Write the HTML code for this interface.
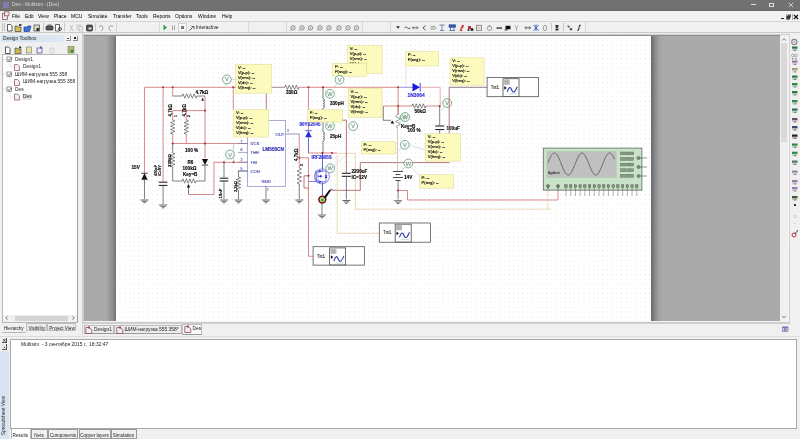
<!DOCTYPE html>
<html><head><meta charset="utf-8"><style>
*{margin:0;padding:0;box-sizing:border-box}
html,body{width:800px;height:439px;overflow:hidden;background:#f0f0f0;font-family:"Liberation Sans",sans-serif;font-size:5px;color:#000;position:relative}
.a{position:absolute}
.t{position:absolute;white-space:nowrap;line-height:1}
.mi{position:absolute;top:14.25px;font-size:5px;color:#000;white-space:nowrap;line-height:1}
.tab{position:absolute;border:1px solid #bdbdbd;background:#ececec;font-size:4.9px;color:#222;white-space:nowrap;line-height:1}
.tr{position:absolute;font-size:4.9px;color:#222;white-space:nowrap;line-height:1}
</style></head><body>
<div id="root" style="position:absolute;left:0;top:0;width:800px;height:439px;will-change:transform">
<div class="a" style="left:0px;top:0px;width:800px;height:10.5px;background:#717171;border-bottom:0.6px solid #686868"></div>
<div class="a" style="left:3px;top:2px;width:6px;height:6px;background:#7f7db0;border-radius:1px"></div>
<div class="t" style="left:12px;top:2.6px;font-size:4.9px;color:#d8d8d8;">Des - Multisim - [Des]</div>
<div class="a" style="left:751px;top:4.2px;width:4.5px;height:0.7px;background:#e0e0e0;"></div>
<div class="a" style="left:769.3px;top:2.5px;width:4.5px;height:4.2px;background:transparent;border:0.6px solid #e0e0e0"></div>
<svg class="a" style="left:788px;top:2px" width="6" height="6"><path d="M0.7 0.7L5.3 5.3M5.3 0.7L0.7 5.3" stroke="#e0e0e0" stroke-width="0.8"/></svg>
<div class="a" style="left:0px;top:10.5px;width:800px;height:10.5px;background:#f2f2f2;"></div>
<svg class="a" style="left:1px;top:11px" width="9" height="9"><rect x="1.5" y="2.5" width="5" height="6" fill="#f3e6e6" stroke="#8a5a5a" stroke-width="0.8"/><rect x="3.5" y="0.8" width="4.5" height="4" fill="#f3e6e6" stroke="#8a5a5a" stroke-width="0.8"/></svg>
<div class="mi" style="left:12px">File</div>
<div class="mi" style="left:25px">Edit</div>
<div class="mi" style="left:38px">View</div>
<div class="mi" style="left:54px">Place</div>
<div class="mi" style="left:71px">MCU</div>
<div class="mi" style="left:88px">Simulate</div>
<div class="mi" style="left:113px">Transfer</div>
<div class="mi" style="left:136px">Tools</div>
<div class="mi" style="left:153px">Reports</div>
<div class="mi" style="left:175px">Options</div>
<div class="mi" style="left:198px">Window</div>
<div class="mi" style="left:222px">Help</div>
<div class="a" style="left:781px;top:18px;width:3px;height:1px;background:#222;"></div>
<div class="a" style="left:785.5px;top:14px;width:0.6px;height:6px;background:#aaa;"></div>
<svg class="a" style="left:786px;top:14px" width="6" height="6"><rect x="1.5" y="0.5" width="3.5" height="3" fill="#555"/><rect x="0.5" y="2" width="3.5" height="3.5" fill="#333"/></svg>
<div class="a" style="left:792px;top:14px;width:0.6px;height:6px;background:#aaa;"></div>
<svg class="a" style="left:793px;top:14px" width="6" height="6"><path d="M1 1L5 5M5 1L1 5" stroke="#111" stroke-width="1.1"/></svg>
<div class="a" style="left:0px;top:21px;width:800px;height:12px;background:#f0f0f0;border-top:1px solid #d6d6d6;border-bottom:1px solid #cacaca"></div>
<div class="a" style="left:2.2px;top:23px;width:0.8px;height:8px;background:#c0c0c0;"></div>
<div class="a" style="left:3.6px;top:23px;width:0.8px;height:8px;background:#c0c0c0;"></div>
<svg class="a" style="left:0;top:21px" width="800" height="12">
<g stroke-width="0.8">
<path d="M7.5 3.5h3l1.5 1.5v5h-4.5z" fill="#fff" stroke="#333"/>
<path d="M15 5h2l1 1h3v4.5h-6z" fill="#d8c050" stroke="#555"/><rect x="19" y="3" width="2.5" height="2" fill="#444"/>
<path d="M24 6h3l1-1h3l-1.5 5.5h-5.5z" fill="#3d6fd6" stroke="#2a4fa0"/>
<rect x="34" y="4" width="5.5" height="6" fill="#e2dcb4" stroke="#555"/><rect x="36.5" y="7" width="2.5" height="3" fill="#333"/>
<rect x="46" y="5" width="7" height="4" rx="1" fill="#555" stroke="#333"/><rect x="47.5" y="3.5" width="4" height="1.5" fill="#777"/>
<path d="M55.5 3.5h4v6.5h-4z" fill="#fff" stroke="#444"/><circle cx="60" cy="8" r="1.5" fill="none" stroke="#333"/>
<path d="M70 4l3 6M73 4l-3 6" stroke="#b8b8b8"/>
<rect x="77" y="4" width="3.5" height="4.5" fill="#eee" stroke="#c0c0c0"/><rect x="79" y="5.5" width="3.5" height="4.5" fill="#eee" stroke="#c0c0c0"/>
<rect x="86.5" y="4" width="6" height="6" rx="1" fill="#505050" stroke="#333"/><rect x="88.5" y="6.5" width="3" height="2" fill="#ddd"/>
<path d="M99 5.5q3-2.5 4 1q0 2-1.5 3.5" fill="none" stroke="#9a9a9a" stroke-width="1"/>
<path d="M113 5.5q-3-2.5-4 1q0 2 1.5 3.5" fill="none" stroke="#9a9a9a" stroke-width="1"/>
<path d="M163.5 3.5l3.5 3-3.5 3z" fill="#2f9a4a"/>
<rect x="172" y="4.5" width="0.9" height="4.5" fill="#999"/><rect x="174" y="4.5" width="0.9" height="4.5" fill="#999"/>
<rect x="178.5" y="2.5" width="8" height="8.5" fill="#f8f8f8" stroke="#c8c8c8"/><rect x="181" y="5" width="3" height="3" fill="#777"/>
<path d="M189.5 9.5l3-3M191.5 5.5h2.5v2.5" fill="none" stroke="#444" stroke-width="0.9"/>
</g>
<g fill="none" stroke="#666" stroke-width="0.7">

<circle cx="293" cy="6.8" r="2.2"/><path d="M291.4 8.4l-1.3 1.3" stroke="#777" stroke-width="0.8"/><circle cx="293" cy="6.8" r="0.7" fill="#888" stroke="none"/>
<circle cx="302" cy="6.8" r="2.2"/><path d="M300.4 8.4l-1.3 1.3" stroke="#777" stroke-width="0.8"/><circle cx="302" cy="6.8" r="0.7" fill="#888" stroke="none"/>
<circle cx="310.5" cy="6.8" r="2.2"/><path d="M308.9 8.4l-1.3 1.3" stroke="#777" stroke-width="0.8"/><circle cx="310.5" cy="6.8" r="0.7" fill="#888" stroke="none"/>
<circle cx="320" cy="6.8" r="2.2"/><path d="M318.4 8.4l-1.3 1.3" stroke="#777" stroke-width="0.8"/><circle cx="320" cy="6.8" r="0.7" fill="#888" stroke="none"/>
<circle cx="329" cy="6.8" r="2.2"/><path d="M327.4 8.4l-1.3 1.3" stroke="#777" stroke-width="0.8"/><circle cx="329" cy="6.8" r="0.7" fill="#888" stroke="none"/>
<circle cx="339" cy="6.8" r="2.2"/><path d="M337.4 8.4l-1.3 1.3" stroke="#777" stroke-width="0.8"/><circle cx="339" cy="6.8" r="0.7" fill="#888" stroke="none"/>
<circle cx="348" cy="6.8" r="2.2"/><path d="M346.4 8.4l-1.3 1.3" stroke="#777" stroke-width="0.8"/><circle cx="348" cy="6.8" r="0.7" fill="#888" stroke="none"/>
<circle cx="356.5" cy="6.8" r="2.2"/><path d="M354.9 8.4l-1.3 1.3" stroke="#777" stroke-width="0.8"/><circle cx="356.5" cy="6.8" r="0.7" fill="#888" stroke="none"/>
</g><g>

<path d="M396 5.2h4l-2 2.6z" fill="#333"/>
<path d="M404.5 6.8q1.5-1.8 3 0t3 0" fill="none" stroke="#555" stroke-width="0.9"/>
<path d="M412.5 6.8h5.5M413.8 5.4l-1.3 1.4 1.3 1.4M416.7 5.4l1.3 1.4-1.3 1.4" fill="none" stroke="#555" stroke-width="0.8"/>
<path d="M425.5 4.6l-2.6 2.2 2.6 2.2" fill="none" stroke="#444" stroke-width="0.9"/>
<path d="M430.5 5.8h3.5M430.5 7.8h3.5M434 4.8l1.8 2-1.8 2" fill="none" stroke="#666" stroke-width="0.7"/>
<path d="M439.5 4h5M442 4v5M440 9.5h4" fill="none" stroke="#6a7aa8" stroke-width="0.9"/>
<path d="M449 3.8h6.5v2.5h-6.5zM450.5 6.3v3M454 6.3v3M449.5 9.5h5.5" fill="#3a5ab0" stroke="#2a4aa0" stroke-width="0.7"/>
<path d="M460 8.5l2-4.5h2l-1 3.5h-3z" fill="#d83a3a"/><circle cx="461" cy="9" r="1.2" fill="#d83a3a"/>
<path d="M468 5h3v3h-3z" fill="#c03030"/><circle cx="472" cy="8.5" r="1.5" fill="#222"/><circle cx="468.5" cy="9" r="1" fill="#222"/>
<rect x="476.5" y="4.3" width="5" height="5" fill="none" stroke="#777" stroke-width="0.8"/><path d="M477.5 6.8h3" stroke="#777" stroke-width="0.6"/>
<circle cx="489.5" cy="7.2" r="2.2" fill="none" stroke="#888" stroke-width="0.8"/><path d="M489.5 4v2" stroke="#888" stroke-width="0.8"/>
<path d="M496.5 6.3h5.5v1.5h-5.5z" fill="#444"/>
<path d="M505.5 4.8h5v3.5h-5z" fill="#111"/><path d="M504.5 9h3" stroke="#111" stroke-width="0.8"/>
<path d="M514.8 4.5l1.7 2.3 1.7-2.3M516.5 6.8v2.8" fill="none" stroke="#888" stroke-width="0.8"/>
<path d="M525 6.8h5.5M526.3 5.3l-1.3 1.5 1.3 1.5M529.2 5.3l1.3 1.5-1.3 1.5" fill="none" stroke="#555" stroke-width="0.9"/>
<path d="M533.5 4l5 5.5M538.5 4l-5 5.5M536 3.5v6.5" fill="none" stroke="#2a5ab8" stroke-width="0.9"/>
<ellipse cx="545" cy="7" rx="1.8" ry="2.6" fill="none" stroke="#888" stroke-width="0.8"/>
<path d="M555.2 4h3.5l-0.8 3h-2zM555.5 7.5h3v2h-3z" fill="#333"/>
<circle cx="568.5" cy="5.5" r="1" fill="#555"/><circle cx="571" cy="8.3" r="1.2" fill="#555"/><path d="M567.5 4.5l4.5 4.5" stroke="#555" stroke-width="0.6"/>
<path d="M577.3 9.3h1.2l1-5h1.5" fill="none" stroke="#111" stroke-width="0.9"/>

</g></svg>
<div class="t" style="left:196px;top:26.2px;font-size:4.9px;color:#111;">Interactive</div>
<div class="a" style="left:42.5px;top:23px;width:0.8px;height:8px;background:#c8c8c8;"></div>
<div class="a" style="left:64.4px;top:23px;width:0.8px;height:8px;background:#c8c8c8;"></div>
<div class="a" style="left:95.4px;top:23px;width:0.8px;height:8px;background:#c8c8c8;"></div>
<div class="a" style="left:116px;top:22px;width:1px;height:10px;background:#d9d9d9;"></div>
<div class="a" style="left:158.5px;top:22px;width:1px;height:10px;background:#d9d9d9;"></div>
<div class="a" style="left:248px;top:22px;width:1px;height:10px;background:#d9d9d9;"></div>
<div class="a" style="left:285.6px;top:22px;width:1px;height:10px;background:#d9d9d9;"></div>
<div class="a" style="left:362px;top:22px;width:1px;height:10px;background:#d9d9d9;"></div>
<div class="a" style="left:390px;top:22px;width:1px;height:10px;background:#d9d9d9;"></div>
<div class="a" style="left:585px;top:22px;width:1px;height:10px;background:#d9d9d9;"></div>
<div class="a" style="left:551px;top:23px;width:0.8px;height:8px;background:#c8c8c8;"></div>
<div class="a" style="left:563px;top:23px;width:0.8px;height:8px;background:#c8c8c8;"></div>
<div class="a" style="left:0px;top:33px;width:83px;height:302px;background:#f0f0f0;"></div>
<div class="a" style="left:1px;top:34.5px;width:63px;height:7px;background:linear-gradient(to right,#d3e1f1,#dfe8f3);"></div>
<div class="t" style="left:3px;top:37px;font-size:4.9px;color:#222;">Design Toolbox</div>
<div class="a" style="left:65.5px;top:35.5px;width:5.8px;height:5.8px;background:#f4f4f4;border-right:0.9px solid #999;border-bottom:0.9px solid #999"></div>
<div class="a" style="left:67px;top:38px;width:2px;height:0.8px;background:#555;"></div>
<div class="a" style="left:72.5px;top:35.5px;width:5.5px;height:5.8px;background:#f4f4f4;border-right:0.9px solid #888;border-bottom:0.9px solid #888"></div>
<div class="a" style="left:74px;top:37px;width:2px;height:2px;background:#222;"></div>
<svg class="a" style="left:0;top:44px" width="83" height="10">
<path d="M5.5 3h3l1.5 1.5v5h-4.5z" fill="#fff" stroke="#333" stroke-width="0.8"/>
<path d="M15 4h2l1 1h3v4.5h-6z" fill="#c8b848" stroke="#555" stroke-width="0.7"/><rect x="19" y="2.5" width="2.2" height="1.8" fill="#333"/>
<rect x="26.5" y="3" width="5" height="6" fill="#e8e2a0" stroke="#888" stroke-width="0.7"/>
<rect x="37" y="4" width="5" height="5" fill="#eef" stroke="#5a5a9a" stroke-width="0.8"/><rect x="40" y="2.5" width="2" height="2" fill="#5a5a9a"/>
<rect x="50" y="4" width="4" height="5" fill="#e8e8e8" stroke="#ccc" stroke-width="0.7"/>
<rect x="68" y="2.5" width="6" height="6.5" fill="#b4b880" stroke="#7a7a40" stroke-width="0.6"/><circle cx="72" cy="7" r="1.6" fill="#3a8a3a"/>
</svg>
<div class="a" style="left:2px;top:53.5px;width:75.5px;height:269px;background:#fff;border:0.8px solid #b8b8b8;border-right:1.2px solid #a0a0a0"></div>
<svg class="a" style="left:0;top:53px" width="80" height="50"><g fill="none" stroke="#aaa" stroke-width="0.5" stroke-dasharray="0.8 0.8"><path d="M3 6.5h4M10 9v5h4M3 21h4M10 24v5h4M3 36h4M10 39v5h4"/></g><g stroke="#555" stroke-width="0.6" fill="#fff"><rect x="7" y="4" width="4.5" height="4.5"/><rect x="7" y="19" width="4.5" height="4.5"/><rect x="7" y="34" width="4.5" height="4.5"/></g><g fill="none" stroke="#222" stroke-width="0.7"><path d="M8 6.3l1.2 1.3 2-2.6M8 21.3l1.2 1.3 2-2.6M8 36.3l1.2 1.3 2-2.6"/></g><g stroke="#8a4a5a" stroke-width="0.7" fill="#f6eef0"><path d="M14.5 11.5h3l2 2v4h-5z"/><path d="M14.5 26.5h3l2 2v4h-5z"/><path d="M14.5 41h3l2 2v4h-5z"/></g></svg>
<div class="a" style="left:21.5px;top:93.5px;width:10px;height:6.5px;background:#e6e6e6;"></div>
<div class="tr" style="left:15px;top:57.7px">Design1</div>
<div class="tr" style="left:23px;top:65.1px">Design1</div>
<div class="tr" style="left:15px;top:72.5px">ШИМ-нагрузка 555 358</div>
<div class="tr" style="left:23px;top:80.1px">ШИМ-нагрузка 555 358</div>
<div class="tr" style="left:15px;top:87.5px">Des</div>
<div class="tr" style="left:23px;top:94.9px">Des</div>
<div class="a" style="left:3px;top:314.5px;width:74px;height:7px;background:#f0f0f0;"></div>
<div class="a" style="left:15px;top:315.5px;width:53px;height:5px;background:#d4d4d4;"></div>
<svg class="a" style="left:3px;top:315px" width="74" height="6"><path d="M4.5 1.2l-1.6 1.8 1.6 1.8M69.5 1.2l1.6 1.8-1.6 1.8" fill="none" stroke="#555" stroke-width="0.7"/></svg>
<div class="a" style="left:2px;top:323px;width:24px;height:9.6px;background:#f0f0f0;border-bottom:1px solid #b8b8b8"></div>
<div class="t" style="left:4px;top:327.4px;font-size:4.6px;color:#222;">Hierarchy</div>
<div class="tab" style="left:26px;top:323px;width:20.5px;height:8px;padding:3.2px 0 0 1.5px;font-size:4.6px">Visibility</div>
<div class="tab" style="left:46.5px;top:323px;width:29px;height:8px;padding:3.2px 0 0 1.8px;font-size:4.6px">Project View</div>
<div class="a" style="left:82.3px;top:33px;width:0.8px;height:302px;background:#d0d0d0;"></div>
<div class="a" style="left:83px;top:34px;width:707px;height:289px;background:#f4f4f4;border:1px solid #cdcdcd"></div>
<div class="a" style="left:84px;top:35px;width:696px;height:286px;background:linear-gradient(to right,#a9a9a9 0px,#aaaaaa 22px,#8c8c8c 29px,#727272 32px,#686868 567px,#8a8a8a 571px,#a2a2a2 575px,#aaaaaa 579px);border-top:1px solid #8e8e8e"></div>
<div class="a" style="left:116px;top:36px;width:535px;height:285px;background-color:#fff;background-image:radial-gradient(circle,#e2e2e2 0.45px,transparent 0.75px);background-size:4.70px 4.70px;background-position:1.65px 1.9px"></div>
<div class="a" style="left:780px;top:35px;width:8px;height:286px;background:#f0f0f0;"></div>
<svg class="a" style="left:780px;top:36px" width="8" height="285"><path d="M2.2 4.5l1.8-1.8 1.8 1.8M2.2 280l1.8 1.8 1.8-1.8" fill="none" stroke="#444" stroke-width="0.7"/></svg>
<div class="a" style="left:780.5px;top:43px;width:6.5px;height:99px;background:#d9d9d9;"></div>
<div class="a" style="left:789px;top:35px;width:11px;height:212px;background:#f0f0f0;border-left:0.8px solid #d3d3d3"></div>
<svg class="a" style="left:789px;top:35px" width="11" height="212"><g><circle cx="5.3" cy="7" r="2.6" fill="none" stroke="#888" stroke-width="1.1"/><circle cx="5.3" cy="7" r="1" fill="#aaa"/><rect x="3" y="11.5" width="5.5" height="2.2" fill="#2e7a44"/><rect x="3" y="13.7" width="5.5" height="2.2" fill="#2e7a44" opacity="0.25"/><rect x="5" y="14.9" width="2" height="1" fill="#333" opacity="0.6"/><circle cx="3.8" cy="20.5" r="1.3" fill="none" stroke="#777" stroke-width="0.6"/><circle cx="6.8" cy="20.5" r="1.3" fill="none" stroke="#777" stroke-width="0.6"/><path d="M3 23.8h1.5M6 23.8h1.5" stroke="#333" stroke-width="0.8"/><rect x="3" y="25.5" width="5.5" height="2.2" fill="#9a7aa8"/><rect x="3" y="27.7" width="5.5" height="2.2" fill="#9a7aa8" opacity="0.25"/><rect x="5" y="28.9" width="2" height="1" fill="#333" opacity="0.6"/><rect x="3" y="33" width="5.5" height="2.2" fill="#a89870"/><rect x="3" y="35.2" width="5.5" height="2.2" fill="#a89870" opacity="0.25"/><rect x="5" y="36.4" width="2" height="1" fill="#333" opacity="0.6"/><rect x="3" y="40.5" width="5.5" height="2.2" fill="#2e7a44"/><rect x="3" y="42.7" width="5.5" height="2.2" fill="#2e7a44" opacity="0.25"/><rect x="5" y="43.9" width="2" height="1" fill="#333" opacity="0.6"/><rect x="3" y="48" width="5.5" height="2.2" fill="#2e8a44"/><rect x="3" y="50.2" width="5.5" height="2.2" fill="#2e8a44" opacity="0.25"/><rect x="5" y="51.4" width="2" height="1" fill="#333" opacity="0.6"/><rect x="3" y="56" width="5.5" height="2.2" fill="#2e7a44"/><rect x="3" y="58.2" width="5.5" height="2.2" fill="#2e7a44" opacity="0.25"/><rect x="5" y="59.4" width="2" height="1" fill="#333" opacity="0.6"/><rect x="3" y="65" width="5.5" height="2.2" fill="#2e8a44"/><rect x="3" y="67.2" width="5.5" height="2.2" fill="#2e8a44" opacity="0.25"/><rect x="5" y="68.4" width="2" height="1" fill="#333" opacity="0.6"/><rect x="3" y="73.5" width="5.5" height="2.2" fill="#2a6a5a"/><rect x="3" y="75.7" width="5.5" height="2.2" fill="#2a6a5a" opacity="0.25"/><rect x="5" y="76.9" width="2" height="1" fill="#333" opacity="0.6"/><rect x="3" y="83" width="5.5" height="2.2" fill="#6a4a6a"/><rect x="3" y="85.2" width="5.5" height="2.2" fill="#6a4a6a" opacity="0.25"/><rect x="5" y="86.4" width="2" height="1" fill="#333" opacity="0.6"/><rect x="3" y="91" width="5.5" height="2.2" fill="#3a4a7a"/><rect x="3" y="93.2" width="5.5" height="2.2" fill="#3a4a7a" opacity="0.25"/><rect x="5" y="94.4" width="2" height="1" fill="#333" opacity="0.6"/><rect x="3" y="99.5" width="5.5" height="2.2" fill="#222"/><rect x="3" y="101.7" width="5.5" height="2.2" fill="#222" opacity="0.25"/><rect x="5" y="102.9" width="2" height="1" fill="#333" opacity="0.6"/><rect x="3" y="108.5" width="5.5" height="2.2" fill="#2e8a44"/><rect x="3" y="110.7" width="5.5" height="2.2" fill="#2e8a44" opacity="0.25"/><rect x="5" y="111.9" width="2" height="1" fill="#333" opacity="0.6"/><rect x="3" y="116.69999999999999" width="5.5" height="2.2" fill="#2e8a44"/><rect x="3" y="118.89999999999999" width="5.5" height="2.2" fill="#2e8a44" opacity="0.25"/><rect x="5" y="120.1" width="2" height="1" fill="#333" opacity="0.6"/><rect x="3" y="125.5" width="5.5" height="2.2" fill="#4a7a6a"/><rect x="3" y="127.7" width="5.5" height="2.2" fill="#4a7a6a" opacity="0.25"/><rect x="5" y="128.9" width="2" height="1" fill="#333" opacity="0.6"/><rect x="3" y="135.5" width="5.5" height="2.2" fill="#8a8aa0"/><rect x="3" y="137.7" width="5.5" height="2.2" fill="#8a8aa0" opacity="0.25"/><rect x="5" y="138.9" width="2" height="1" fill="#333" opacity="0.6"/><rect x="3" y="145" width="5.5" height="2.2" fill="#9a7ab0"/><rect x="3" y="147.2" width="5.5" height="2.2" fill="#9a7ab0" opacity="0.25"/><rect x="5" y="148.4" width="2" height="1" fill="#333" opacity="0.6"/><rect x="3" y="152" width="5.5" height="2.2" fill="#9a7ab0"/><rect x="3" y="154.2" width="5.5" height="2.2" fill="#9a7ab0" opacity="0.25"/><rect x="5" y="155.4" width="2" height="1" fill="#333" opacity="0.6"/><rect x="3" y="161" width="5.5" height="2.2" fill="#3a5a2a"/><rect x="3" y="163.2" width="5.5" height="2.2" fill="#3a5a2a" opacity="0.25"/><rect x="5" y="164.4" width="2" height="1" fill="#333" opacity="0.6"/></g></svg>
<div class="a" style="left:794px;top:204px;width:1.5px;height:1.5px;background:#333;"></div>
<div class="a" style="left:792.5px;top:215px;width:4px;height:3px;background:transparent;border:0.6px solid #ccc;border-radius:2px"></div>
<div class="a" style="left:794px;top:222.5px;width:1px;height:1px;background:#bbb;"></div>
<svg class="a" style="left:790px;top:229px" width="10" height="10"><circle cx="4" cy="6" r="2" fill="none" stroke="#c03040" stroke-width="1"/><path d="M5 5l3-4" stroke="#222" stroke-width="0.9"/></svg>
<div class="a" style="left:83px;top:323px;width:707px;height:13px;background:#f0f0f0;"></div>
<div class="a" style="left:83px;top:323px;width:707px;height:1px;background:#cfcfcf;"></div>
<div class="a" style="left:83.5px;top:324.5px;width:30px;height:9px;background:#ececec;border:0.8px solid #bdbdbd;border-bottom:1px solid #9a9a9a"></div>
<svg class="a" style="left:85.0px;top:325.5px" width="8" height="8"><path d="M0.8 1.5h3.5l2.5 2.5v3.5h-6z" fill="#f6eef0" stroke="#8a4a5a" stroke-width="0.8"/><rect x="3" y="0.5" width="2" height="2" fill="#8a4a5a"/></svg>
<div class="t" style="left:94.0px;top:327.6px;font-size:4.9px;color:#222">Design1</div>
<div class="a" style="left:114px;top:324.5px;width:67.5px;height:9px;background:#ececec;border:0.8px solid #bdbdbd;border-bottom:1px solid #9a9a9a"></div>
<svg class="a" style="left:115.5px;top:325.5px" width="8" height="8"><path d="M0.8 1.5h3.5l2.5 2.5v3.5h-6z" fill="#f6eef0" stroke="#8a4a5a" stroke-width="0.8"/><rect x="3" y="0.5" width="2" height="2" fill="#8a4a5a"/></svg>
<div class="t" style="left:124.5px;top:327.6px;font-size:4.9px;color:#222">ШИМ-нагрузка 555 358*</div>
<div class="a" style="left:182px;top:323.5px;width:19.5px;height:11px;background:#fafafa;border:0.8px solid #bdbdbd;border-bottom:1px solid #9a9a9a"></div>
<svg class="a" style="left:183.5px;top:324.5px" width="8" height="8"><path d="M0.8 1.5h3.5l2.5 2.5v3.5h-6z" fill="#f6eef0" stroke="#8a4a5a" stroke-width="0.8"/><rect x="3" y="0.5" width="2" height="2" fill="#8a4a5a"/></svg>
<div class="t" style="left:192.5px;top:326.6px;font-size:4.9px;color:#222">Des</div>
<svg class="a" style="left:781px;top:325px" width="9" height="9"><rect x="1.5" y="2.5" width="5.5" height="4" fill="#c8c8e8" stroke="#6a6ab0" stroke-width="0.6"/><path d="M3 3.5l2.5 2M5.5 3.5l-2.5 2" stroke="#333" stroke-width="0.6"/><rect x="1.5" y="1.5" width="5.5" height="1.2" fill="#6a6ab0"/></svg>
<div class="a" style="left:0px;top:335.5px;width:800px;height:103.5px;background:#f0f0f0;border-top:0.8px solid #dcdcdc"></div>
<div class="a" style="left:2px;top:338px;width:5px;height:4.5px;background:#eaeaea;border-right:0.8px solid #555;border-bottom:0.8px solid #555"></div>
<svg class="a" style="left:2px;top:338px" width="5" height="5"><path d="M1.2 1.2l2.4 2.2M3.6 1.2l-2.4 2.2" stroke="#111" stroke-width="0.8"/></svg>
<div class="a" style="left:2px;top:344px;width:5px;height:5.5px;background:#eaeaea;border-right:0.8px solid #555;border-bottom:0.8px solid #555"></div>
<div class="a" style="left:4px;top:346.5px;width:1px;height:1px;background:#333;"></div>
<div class="a" style="left:0px;top:351px;width:8.5px;height:88px;background:#d9e4f2;"></div>
<div class="t" style="left:-16px;top:413px;width:40px;font-size:4.9px;color:#333;transform:rotate(-90deg);text-align:center">Spreadsheet View</div>
<div class="a" style="left:10px;top:339px;width:787px;height:89.5px;background:#fff;border:0.9px solid #a8a8a8"></div>
<div class="t" style="left:21px;top:343.2px;font-size:4.95px;color:#222;">Multisim&nbsp; - 3 сентября 2015 г., 18:32:47</div>
<div class="a" style="left:11px;top:428.5px;width:19.5px;height:10.5px;background:#fff;border-left:0.6px solid #bbb;border-right:0.6px solid #bbb"></div>
<div class="t" style="left:12.5px;top:434px;font-size:4.7px;color:#222;">Results</div>
<div class="tab" style="left:30.5px;top:428.5px;width:17px;height:10.5px;padding:4.2px 0 0 0;text-align:center;font-size:4.6px;background:#f0f0f0;border-color:#9a9a9a">Nets</div>
<div class="tab" style="left:48px;top:428.5px;width:30px;height:10.5px;padding:4.2px 0 0 0;text-align:center;font-size:4.6px;background:#f0f0f0;border-color:#9a9a9a">Components</div>
<div class="tab" style="left:78.5px;top:428.5px;width:32px;height:10.5px;padding:4.2px 0 0 0;text-align:center;font-size:4.6px;background:#f0f0f0;border-color:#9a9a9a">Copper layers</div>
<div class="tab" style="left:110.5px;top:428.5px;width:26px;height:10.5px;padding:4.2px 0 0 0;text-align:center;font-size:4.6px;background:#f0f0f0;border-color:#9a9a9a">Simulation</div>
<svg class="a" style="left:0;top:0;will-change:transform" width="800" height="439" viewBox="0 0 800 439"><defs><clipPath id="sc"><rect x="116" y="36" width="535" height="285"/></clipPath></defs><g clip-path="url(#sc)">
<path d="M144.5 173 L144.5 87.3 L236 87.3" fill="none" stroke="#c85a5a" stroke-width="0.7"/>
<path d="M271 87.3 L284.8 87.3" fill="none" stroke="#7a5a5a" stroke-width="0.7"/>
<path d="M284.8 87.3 L285.69 85.1 L287.46 89.5 L289.24 85.1 L291.01 89.5 L292.79 85.1 L294.56 89.5 L296.34 85.1 L298.11 89.5 L299 87.3" fill="none" stroke="#4a4a4a" stroke-width="0.65"/>
<text x="286" y="93.5" font-size="4.6" fill="#000" font-weight="bold" stroke="#000" stroke-width="0.12" text-anchor="start" font-family="Liberation Sans">330Ω</text>
<path d="M299 87.3 L398.1 87.3" fill="none" stroke="#c85a5a" stroke-width="0.7"/>
<path d="M398.1 87.3 L413 87.3" fill="none" stroke="#6a6ad0" stroke-width="0.7"/>
<circle cx="163.1" cy="87.3" r="1.05" fill="#b02838"/>
<circle cx="172.7" cy="87.3" r="1.05" fill="#b02838"/>
<circle cx="233.3" cy="87.3" r="1.05" fill="#b02838"/>
<circle cx="308.5" cy="87.3" r="1.05" fill="#b02838"/>
<circle cx="323" cy="87.3" r="1.05" fill="#b02838"/>
<circle cx="398.1" cy="87.3" r="1.05" fill="#b02838"/>
<path d="M141.3 179.7L147.7 179.7L144.5 173.3z" fill="#111"/><path d="M141.3 173.3h6.4" stroke="#111" stroke-width="0.8"/>
<path d="M144.5 180 L144.5 199" fill="none" stroke="#4a4a4a" stroke-width="0.7"/>
<path d="M140.5 200h8M141.9 201.4h5.2M143.3 202.8h2.4" stroke="#3a3a3a" stroke-width="0.75"/>
<text x="131.5" y="168.8" font-size="4.7" fill="#000" font-weight="bold" stroke="#000" stroke-width="0.12" text-anchor="start" font-family="Liberation Sans">15V</text>
<path d="M163.1 87.3 L163.1 181.5" fill="none" stroke="#c85a5a" stroke-width="0.7"/>
<path d="M158.79999999999998 182.2h8.6M158.79999999999998 185.39999999999998h8.6" stroke="#111" stroke-width="1"/>
<path d="M163.1 185.4 L163.1 204" fill="none" stroke="#4a4a4a" stroke-width="0.7"/>
<path d="M159.1 205h8M160.5 206.4h5.2M161.9 207.8h2.4" stroke="#3a3a3a" stroke-width="0.75"/>
<text x="156.5" y="176" font-size="3.8" fill="#000" font-weight="bold" stroke="#000" stroke-width="0.12" text-anchor="start" font-family="Liberation Sans" transform="rotate(-90 156.5 176)">470pF</text>
<text x="161" y="176" font-size="3.8" fill="#000" font-weight="bold" stroke="#000" stroke-width="0.12" text-anchor="start" font-family="Liberation Sans" transform="rotate(-90 161 176)">IC=9V</text>
<path d="M172.7 87.3 L172.7 96" fill="none" stroke="#c85a5a" stroke-width="0.7"/>
<path d="M172.7 96 L182 96" fill="none" stroke="#4a4a4a" stroke-width="0.7"/>
<path d="M182 96 L182.94 93.8 L184.81 98.2 L186.69 93.8 L188.56 98.2 L190.44 93.8 L192.31 98.2 L194.19 93.8 L196.06 98.2 L197 96" fill="none" stroke="#4a4a4a" stroke-width="0.65"/>
<path d="M197 96 L205 96" fill="none" stroke="#4a4a4a" stroke-width="0.7"/>
<path d="M205 96 L205 110.6" fill="none" stroke="#c85a5a" stroke-width="0.7"/>
<text x="195.5" y="94" font-size="4.7" fill="#000" font-weight="bold" stroke="#000" stroke-width="0.12" text-anchor="start" font-family="Liberation Sans">4.7kΩ</text>
<text x="201.5" y="100.5" font-size="3.8" fill="#000" font-weight="bold" stroke="#000" stroke-width="0.12" text-anchor="start" font-family="Liberation Sans">4</text>
<path d="M172.7 110.6 L205 110.6" fill="none" stroke="#c85a5a" stroke-width="0.7"/>
<circle cx="186.3" cy="110.6" r="1.05" fill="#b02838"/>
<circle cx="205" cy="110.6" r="1.05" fill="#b02838"/>
<path d="M205 110.6 L205 158.5" fill="none" stroke="#c85a5a" stroke-width="0.7"/>
<path d="M172.7 110.6 L172.7 120" fill="none" stroke="#c85a5a" stroke-width="0.7"/>
<path d="M172.7 120 L174.89999999999998 120.88 L170.5 122.62 L174.89999999999998 124.38 L170.5 126.12 L174.89999999999998 127.88 L170.5 129.62 L174.89999999999998 131.38 L170.5 133.12 L172.7 134" fill="none" stroke="#4a4a4a" stroke-width="0.65"/>
<path d="M172.7 134 L172.7 143.5" fill="none" stroke="#c85a5a" stroke-width="0.7"/>
<path d="M186.3 110.6 L186.3 120" fill="none" stroke="#c85a5a" stroke-width="0.7"/>
<path d="M186.3 120 L188.5 120.88 L184.10000000000002 122.62 L188.5 124.38 L184.10000000000002 126.12 L188.5 127.88 L184.10000000000002 129.62 L188.5 131.38 L184.10000000000002 133.12 L186.3 134" fill="none" stroke="#4a4a4a" stroke-width="0.65"/>
<path d="M186.3 134 L186.3 143.5" fill="none" stroke="#c85a5a" stroke-width="0.7"/>
<text x="172" y="116.5" font-size="4.5" fill="#000" font-weight="bold" stroke="#000" stroke-width="0.12" text-anchor="start" font-family="Liberation Sans" transform="rotate(-90 172 116.5)">4.7kΩ</text>
<text x="185.5" y="116.5" font-size="4.5" fill="#000" font-weight="bold" stroke="#000" stroke-width="0.12" text-anchor="start" font-family="Liberation Sans" transform="rotate(-90 185.5 116.5)">4.7kΩ</text>
<text x="176.5" y="117" font-size="3.4" fill="#000" font-weight="bold" stroke="#000" stroke-width="0.12" text-anchor="start" font-family="Liberation Sans" transform="rotate(-90 176.5 117)">1</text>
<text x="190" y="117" font-size="3.4" fill="#000" font-weight="bold" stroke="#000" stroke-width="0.12" text-anchor="start" font-family="Liberation Sans" transform="rotate(-90 190 117)">2</text>
<path d="M172.7 143.5 L248 143.5" fill="none" stroke="#c85a5a" stroke-width="0.7"/>
<circle cx="172.7" cy="143.5" r="1.05" fill="#b02838"/>
<circle cx="205" cy="143.5" r="1.05" fill="#b02838"/>
<path d="M172.7 143.5 L172.7 153" fill="none" stroke="#4a4a4a" stroke-width="0.7"/>
<path d="M172.7 153 L174.89999999999998 153.88 L170.5 155.62 L174.89999999999998 157.38 L170.5 159.12 L174.89999999999998 160.88 L170.5 162.62 L174.89999999999998 164.38 L170.5 166.12 L172.7 167" fill="none" stroke="#4a4a4a" stroke-width="0.65"/>
<path d="M172.7 167 L172.7 181 L182 181" fill="none" stroke="#4a4a4a" stroke-width="0.7"/>
<text x="171" y="167" font-size="4.3" fill="#000" font-weight="bold" stroke="#000" stroke-width="0.12" text-anchor="start" font-family="Liberation Sans" transform="rotate(-90 171 167)">330kΩ</text>
<path d="M182 181 L182.88 178.8 L184.62 183.2 L186.38 178.8 L188.12 183.2 L189.88 178.8 L191.62 183.2 L193.38 178.8 L195.12 183.2 L196 181" fill="none" stroke="#4a4a4a" stroke-width="0.65"/>
<path d="M196 181 L205 181 L205 166" fill="none" stroke="#4a4a4a" stroke-width="0.7"/>
<path d="M201.9 158.9L208.1 158.9L205 165.1z" fill="#111"/><path d="M201.9 165.1h6.2" stroke="#111" stroke-width="0.8"/>
<path d="M188.5 194.5L188.5 187" stroke="#222" stroke-width="0.6"/><path d="M186.8 187.5l1.7-3.5 1.7 3.5z" fill="#111"/>
<path d="M188.5 194.5 L214 194.5 L214 162.3 L248 162.3" fill="none" stroke="#c85a5a" stroke-width="0.7"/>
<circle cx="224" cy="162.3" r="1.05" fill="#b02838"/>
<circle cx="233.6" cy="162.3" r="1.05" fill="#b02838"/>
<text x="185" y="151.8" font-size="4.7" fill="#000" font-weight="bold" stroke="#000" stroke-width="0.12" text-anchor="start" font-family="Liberation Sans">100 %</text>
<text x="187.5" y="163.8" font-size="4.6" fill="#000" font-weight="bold" stroke="#000" stroke-width="0.12" text-anchor="start" font-family="Liberation Sans">R6</text>
<text x="182.5" y="170.3" font-size="4.6" fill="#000" font-weight="bold" stroke="#000" stroke-width="0.12" text-anchor="start" font-family="Liberation Sans">100kΩ</text>
<text x="183" y="176.3" font-size="4.6" fill="#000" font-weight="bold" stroke="#000" stroke-width="0.12" text-anchor="start" font-family="Liberation Sans">Key=B</text>
<path d="M224 162.3 L224 177.5" fill="none" stroke="#4a4a4a" stroke-width="0.7"/>
<path d="M219.7 178.2h8.6M219.7 181.0h8.6" stroke="#111" stroke-width="1"/>
<path d="M224 181 L224 199" fill="none" stroke="#4a4a4a" stroke-width="0.7"/>
<path d="M220 200h8M221.4 201.4h5.2M222.8 202.8h2.4" stroke="#3a3a3a" stroke-width="0.75"/>
<text x="222" y="198.5" font-size="4.2" fill="#000" font-weight="bold" stroke="#000" stroke-width="0.12" text-anchor="start" font-family="Liberation Sans" transform="rotate(-90 222 198.5)">10nF</text>
<path d="M248 171 L238.5 171 L238.5 177" fill="none" stroke="#4a4a4a" stroke-width="0.7"/>
<path d="M238.5 177 L240.7 177.81 L236.3 179.44 L240.7 181.06 L236.3 182.69 L240.7 184.31 L236.3 185.94 L240.7 187.56 L236.3 189.19 L238.5 190" fill="none" stroke="#4a4a4a" stroke-width="0.65"/>
<path d="M238.5 190 L238.5 199" fill="none" stroke="#4a4a4a" stroke-width="0.7"/>
<path d="M234.5 200h8M235.9 201.4h5.2M237.3 202.8h2.4" stroke="#3a3a3a" stroke-width="0.75"/>
<text x="236.5" y="192" font-size="4" fill="#000" font-weight="bold" stroke="#000" stroke-width="0.12" text-anchor="start" font-family="Liberation Sans" transform="rotate(-90 236.5 192)">2.2kΩ</text>
<path d="M233.6 143.5 L233.6 162.3" fill="none" stroke="#a0a0a0" stroke-width="0.5"/>
<rect x="247.5" y="120.5" width="37.8" height="65.8" fill="#fff" fill-opacity="0.3" stroke="#7078b8" stroke-width="0.6"/>
<path d="M238 143.5H247.5" stroke="#6a72b0" stroke-width="0.6"/>
<text x="250.5" y="145.1" font-size="4.2" fill="#3a3aa8" stroke="#3a3aa8" stroke-width="0.1" text-anchor="start" font-family="Liberation Sans">DCS</text>
<text x="240.5" y="142.5" font-size="3.5" fill="#3a3aa8" stroke="#3a3aa8" stroke-width="0.1" text-anchor="start" font-family="Liberation Sans">7</text>
<path d="M238 152.4H247.5" stroke="#6a72b0" stroke-width="0.6"/>
<text x="250.5" y="154.0" font-size="4.2" fill="#3a3aa8" stroke="#3a3aa8" stroke-width="0.1" text-anchor="start" font-family="Liberation Sans">THR</text>
<text x="240.5" y="151.4" font-size="3.5" fill="#3a3aa8" stroke="#3a3aa8" stroke-width="0.1" text-anchor="start" font-family="Liberation Sans">6</text>
<path d="M238 162.3H247.5" stroke="#6a72b0" stroke-width="0.6"/>
<text x="250.5" y="163.9" font-size="4.2" fill="#3a3aa8" stroke="#3a3aa8" stroke-width="0.1" text-anchor="start" font-family="Liberation Sans">TRI</text>
<text x="240.5" y="161.3" font-size="3.5" fill="#3a3aa8" stroke="#3a3aa8" stroke-width="0.1" text-anchor="start" font-family="Liberation Sans">2</text>
<path d="M238 171H247.5" stroke="#6a72b0" stroke-width="0.6"/>
<text x="250.5" y="172.6" font-size="4.2" fill="#3a3aa8" stroke="#3a3aa8" stroke-width="0.1" text-anchor="start" font-family="Liberation Sans">CON</text>
<text x="240.5" y="170" font-size="3.5" fill="#3a3aa8" stroke="#3a3aa8" stroke-width="0.1" text-anchor="start" font-family="Liberation Sans">5</text>
<text x="275.5" y="135.6" font-size="4.2" fill="#3a3aa8" stroke="#3a3aa8" stroke-width="0.1" text-anchor="start" font-family="Liberation Sans">OUT</text>
<text x="262.5" y="151" font-size="4.7" fill="#2020b0" font-weight="bold" stroke="#2020b0" stroke-width="0.12" text-anchor="start" font-family="Liberation Sans">LM555CN</text>
<text x="261.5" y="182.5" font-size="4.2" fill="#3a3aa8" stroke="#3a3aa8" stroke-width="0.1" text-anchor="start" font-family="Liberation Sans">GND</text>
<text x="287" y="132" font-size="3.2" fill="#4a52a8" stroke="#4a52a8" stroke-width="0.1" text-anchor="start" font-family="Liberation Sans">3</text>
<text x="267" y="191" font-size="3.2" fill="#4a52a8" stroke="#4a52a8" stroke-width="0.1" text-anchor="start" font-family="Liberation Sans">1</text>
<path d="M266 186.3 L266 199" fill="none" stroke="#4a4a4a" stroke-width="0.7"/>
<path d="M262 200h8M263.4 201.4h5.2M264.8 202.8h2.4" stroke="#3a3a3a" stroke-width="0.75"/>
<path d="M285.3 134 L299.3 134" fill="none" stroke="#6a72b0" stroke-width="0.7"/>
<path d="M233.3 87.3 L233.3 109.6" fill="none" stroke="#c85a5a" stroke-width="0.7"/>
<path d="M266.3 93.2 L266.3 109.6" fill="none" stroke="#a04040" stroke-width="0.7"/>
<path d="M230.5 82l-6 4" stroke="#9ac8b0" stroke-width="0.6"/><path d="M231 79.4H236" stroke="#9aa" stroke-width="0.4"/>
<circle cx="226.9" cy="79.4" r="4.4" fill="#f4faf4" fill-opacity="0.7" stroke="#62987a" stroke-width="0.8"/>
<text x="226.9" y="81.4" font-size="5.6" text-anchor="middle" fill="#5a7a6a" font-family="Liberation Sans">V</text>
<rect x="235.7" y="64.4" width="35.60000000000002" height="28.799999999999997" fill="#fcfabd" stroke="#e0dc9a" stroke-width="0.6"/>
<text x="237.89999999999998" y="68.9" font-size="4.1" fill="#111" stroke="#111" stroke-width="0.16" font-family="Liberation Sans">V: --</text>
<text x="237.89999999999998" y="73.9" font-size="4.1" fill="#111" stroke="#111" stroke-width="0.16" font-family="Liberation Sans">V(p-p): --</text>
<text x="237.89999999999998" y="78.9" font-size="4.1" fill="#111" stroke="#111" stroke-width="0.16" font-family="Liberation Sans">V(rms): --</text>
<text x="237.89999999999998" y="83.9" font-size="4.1" fill="#111" stroke="#111" stroke-width="0.16" font-family="Liberation Sans">V(dc): --</text>
<text x="237.89999999999998" y="88.9" font-size="4.1" fill="#111" stroke="#111" stroke-width="0.16" font-family="Liberation Sans">V(freq): --</text>
<rect x="233.7" y="109.6" width="34.900000000000034" height="27.400000000000006" fill="#fcfabd" stroke="#e0dc9a" stroke-width="0.6"/>
<text x="235.89999999999998" y="114.1" font-size="4.1" fill="#111" stroke="#111" stroke-width="0.16" font-family="Liberation Sans">V: --</text>
<text x="235.89999999999998" y="119.1" font-size="4.1" fill="#111" stroke="#111" stroke-width="0.16" font-family="Liberation Sans">V(p-p): --</text>
<text x="235.89999999999998" y="124.1" font-size="4.1" fill="#111" stroke="#111" stroke-width="0.16" font-family="Liberation Sans">V(rms): --</text>
<text x="235.89999999999998" y="129.1" font-size="4.1" fill="#111" stroke="#111" stroke-width="0.16" font-family="Liberation Sans">V(dc): --</text>
<text x="235.89999999999998" y="134.1" font-size="4.1" fill="#111" stroke="#111" stroke-width="0.16" font-family="Liberation Sans">V(freq): --</text>
<circle cx="230" cy="154.5" r="4.4" fill="#f4faf4" fill-opacity="0.7" stroke="#62987a" stroke-width="0.8"/>
<text x="230" y="156.5" font-size="5.6" text-anchor="middle" fill="#5a7a6a" font-family="Liberation Sans">V</text>
<path d="M227 158.5l-3 3.5" stroke="#9ac8b0" stroke-width="0.6"/>
<path d="M299.3 134 L299.3 168" fill="none" stroke="#c85a5a" stroke-width="0.7"/>
<circle cx="299.3" cy="157.8" r="1.05" fill="#b02838"/>
<path d="M299.3 168 L301.5 169.0 L297.1 171.0 L301.5 173.0 L297.1 175.0 L301.5 177.0 L297.1 179.0 L301.5 181.0 L297.1 183.0 L299.3 184" fill="none" stroke="#4a4a4a" stroke-width="0.65"/>
<path d="M299.3 184 L299.3 199" fill="none" stroke="#4a4a4a" stroke-width="0.7"/>
<path d="M295.3 200h8M296.7 201.4h5.2M298.1 202.8h2.4" stroke="#3a3a3a" stroke-width="0.75"/>
<text x="297.5" y="161" font-size="4.5" fill="#000" font-weight="bold" stroke="#000" stroke-width="0.12" text-anchor="start" font-family="Liberation Sans" transform="rotate(-90 297.5 161)">4.7kΩ</text>
<text x="303" y="166" font-size="3.4" fill="#000" font-weight="bold" stroke="#000" stroke-width="0.12" text-anchor="start" font-family="Liberation Sans" transform="rotate(-90 303 166)">3</text>
<path d="M299.3 157.8 L308.5 157.8 L308.5 256.3 L313.1 256.3" fill="none" stroke="#c85a5a" stroke-width="0.7"/>
<path d="M308.5 175.8 L304 175.8 L304 188 L308.5 188" fill="none" stroke="#a04040" stroke-width="0.7"/>
<circle cx="308.5" cy="175.8" r="1.05" fill="#b02838"/>
<path d="M308.5 87.3 L308.5 130" fill="none" stroke="#c85a5a" stroke-width="0.7"/>
<path d="M305.2 137.3L311.8 137.3L308.5 130.7z" fill="#2a2ad8"/><path d="M305.2 130.7h6.6" stroke="#2a2ad8" stroke-width="0.8"/>
<path d="M308.5 137.3 L308.5 153" fill="none" stroke="#2a2ad8" stroke-width="0.7"/>
<text x="299.5" y="125.8" font-size="4.5" fill="#2a2ad8" font-weight="bold" stroke="#2a2ad8" stroke-width="0.12" text-anchor="start" font-family="Liberation Sans">90YS2045</text>
<path d="M308.5 153 L337 153" fill="none" stroke="#c85a5a" stroke-width="0.7"/>
<path d="M337 153.4 L355.4 153.4 L355.4 209.2 L551 209.2" fill="none" stroke="#e6c9a0" stroke-width="0.7"/>
<circle cx="322.5" cy="153" r="1.05" fill="#b02838"/>
<circle cx="331.9" cy="153" r="1.05" fill="#b02838"/>
<path d="M323 87.3 L323 99" fill="none" stroke="#4a4a4a" stroke-width="0.7"/>
<path d="M323 99 a1.6 1.125 0 0 1 0 2.25 a1.6 1.125 0 0 1 0 2.25 a1.6 1.125 0 0 1 0 2.25 a1.6 1.125 0 0 1 0 2.25" fill="none" stroke="#4a4a4a" stroke-width="0.65"/>
<path d="M323 108 L323 132" fill="none" stroke="#4a4a4a" stroke-width="0.7"/>
<path d="M323 132 a1.6 1.125 0 0 1 0 2.25 a1.6 1.125 0 0 1 0 2.25 a1.6 1.125 0 0 1 0 2.25 a1.6 1.125 0 0 1 0 2.25" fill="none" stroke="#4a4a4a" stroke-width="0.65"/>
<path d="M323 141 L323 153" fill="none" stroke="#4a4a4a" stroke-width="0.7"/>
<text x="330" y="105" font-size="4.6" fill="#000" font-weight="bold" stroke="#000" stroke-width="0.12" text-anchor="start" font-family="Liberation Sans">330pH</text>
<text x="330" y="138" font-size="4.6" fill="#000" font-weight="bold" stroke="#000" stroke-width="0.12" text-anchor="start" font-family="Liberation Sans">25pH</text>
<circle cx="330" cy="93.8" r="4.4" fill="#f4faf4" fill-opacity="0.7" stroke="#62987a" stroke-width="0.8"/>
<text x="330" y="95.8" font-size="5.6" text-anchor="middle" fill="#5a7a6a" font-family="Liberation Sans">W</text>
<circle cx="330" cy="125.8" r="4.4" fill="#f4faf4" fill-opacity="0.7" stroke="#62987a" stroke-width="0.8"/>
<text x="330" y="127.8" font-size="5.6" text-anchor="middle" fill="#5a7a6a" font-family="Liberation Sans">W</text>
<rect x="307.5" y="109.8" width="34.80000000000001" height="12.299999999999997" fill="#fcfabd" stroke="#e0dc9a" stroke-width="0.6"/>
<text x="309.7" y="114.3" font-size="4.1" fill="#111" stroke="#111" stroke-width="0.16" font-family="Liberation Sans">P: --</text>
<text x="309.7" y="119.3" font-size="4.1" fill="#111" stroke="#111" stroke-width="0.16" font-family="Liberation Sans">P(avg): --</text>
<path d="M322.5 153 L322.5 169.8" fill="none" stroke="#2a2ad8" stroke-width="0.7"/>
<path d="M322.5 182.8 L322.5 195.5" fill="none" stroke="#2a2ad8" stroke-width="0.7"/>
<circle cx="321.9" cy="176.4" r="7.5" fill="none" stroke="#5a5ad0" stroke-width="0.7"/>
<path d="M316.8 170.5v12M318.2 170.5v3M318.2 174.8v3M318.2 179.2v3.5M318.2 171.2h4.3M318.2 176.3h4.3M318.2 181.8h4.3M322.5 169.8v1.4M322.5 181.8v1M326 171.2v10.6M322.5 171.2h3.5M322.5 181.8h3.5" stroke="#2a2ad0" stroke-width="0.6" fill="none"/>
<path d="M319 176.3l2.2-1.5v3z" fill="#1a1ad0"/><path d="M321.5 171.2l-2.2-1.4v2.8z" fill="#1a1ad0"/><path d="M324.6 178l1.4-2.4 1.4 2.4z" fill="#1a1ad0"/><path d="M324.6 175.4h2.8" stroke="#1a1ad0" stroke-width="0.5"/><path d="M321.5 181.8l-2.2-1.4v2.8z" fill="#1a1ad0"/>
<path d="M308.5 181.5 L315.8 181.5 L315.8 171" fill="none" stroke="#3a3ad0" stroke-width="0.6"/>
<text x="311.5" y="158.8" font-size="4.5" fill="#2a2ad8" font-weight="bold" stroke="#2a2ad8" stroke-width="0.12" text-anchor="start" font-family="Liberation Sans">IRF2805S</text>
<circle cx="330.2" cy="168.3" r="4.4" fill="#f4faf4" fill-opacity="0.7" stroke="#62987a" stroke-width="0.8"/>
<text x="330.2" y="170.3" font-size="5.6" text-anchor="middle" fill="#5a7a6a" font-family="Liberation Sans">W</text>
<path d="M334 166L348 153" stroke="#b0c0c0" stroke-width="0.4"/>
<circle cx="322.3" cy="199.6" r="3.4" fill="#c8e8a0" stroke="#7a1010" stroke-width="1.6"/><circle cx="322.3" cy="200" r="1.4" fill="#2a9a3a"/>
<path d="M323.5 197.5L329.5 189.5L331 190.5L325.5 198.5z" fill="#111"/><path d="M330 189l3 1.3" stroke="#333" stroke-width="0.6" fill="none"/>
<path d="M322 203.4 L322 214" fill="none" stroke="#4a4a4a" stroke-width="0.7"/>
<path d="M318 215h8M319.4 216.4h5.2M320.8 217.8h2.4" stroke="#3a3a3a" stroke-width="0.75"/>
<path d="M331 189 L333 190.3 L360.3 190.3 L360.3 162.6 L449.7 162.6" fill="none" stroke="#a04040" stroke-width="0.7"/>
<path d="M342.3 120.2 L346.4 120.2 L346.4 172.8" fill="none" stroke="#a04040" stroke-width="0.7"/>
<path d="M341.9 173.3h9.0M341.9 176.3h9.0" stroke="#111" stroke-width="1"/>
<path d="M346.4 176.3 L346.4 199.5" fill="none" stroke="#4a4a4a" stroke-width="0.7"/>
<path d="M342.4 200.5h8M343.79999999999995 201.9h5.2M345.2 203.3h2.4" stroke="#3a3a3a" stroke-width="0.75"/>
<text x="351.5" y="173" font-size="4.6" fill="#000" font-weight="bold" stroke="#000" stroke-width="0.12" text-anchor="start" font-family="Liberation Sans">2200uF</text>
<text x="351.5" y="179" font-size="4.6" fill="#000" font-weight="bold" stroke="#000" stroke-width="0.12" text-anchor="start" font-family="Liberation Sans">IC=12V</text>
<path d="M337.2 155 L337.2 233.4 L379.3 233.4" fill="none" stroke="#e6c9a0" stroke-width="0.7"/>
<rect x="313.1" y="246.7" width="51.5" height="18.400000000000034" fill="#fff" stroke="#4a4a4a" stroke-width="0.75"/>
<text x="316.70000000000005" y="257.5" font-size="4.7" fill="#333" stroke="#333" stroke-width="0.08" font-family="Liberation Mono">Tm1</text>
<rect x="329.6" y="247.89999999999998" width="16" height="17.000000000000057" fill="#fff" stroke="#4a4a4a" stroke-width="0.8"/>
<rect x="330.40000000000003" y="248.49999999999997" width="6" height="5.5" fill="#c8c8c8"/><path d="M330.40000000000003 250.39999999999998h6M330.40000000000003 252.2h6M332.40000000000003 248.49999999999997v5.5M334.40000000000003 248.49999999999997v5.5" stroke="#888" stroke-width="0.35"/>
<path d="M330.90000000000003 255.2l2.4 1.9-2.4 1.9z" fill="#111"/>
<path d="M333.8 261.09999999999997C335.6 255.89999999999998,336.8 255.39999999999998,338.20000000000005 258.9S341.1 262.4,343.90000000000003 255.89999999999998" fill="none" stroke="#2a3aa8" stroke-width="1.1"/>
<path d="M335.6 263.09999999999997h8" stroke="#bbb" stroke-width="0.6"/>
<rect x="379.3" y="223" width="51.30000000000001" height="19.19999999999999" fill="#fff" stroke="#4a4a4a" stroke-width="0.75"/>
<text x="382.90000000000003" y="234.2" font-size="4.7" fill="#333" stroke="#333" stroke-width="0.08" font-family="Liberation Mono">Tm1</text>
<rect x="395.2" y="224.2" width="16" height="17.80000000000001" fill="#fff" stroke="#4a4a4a" stroke-width="0.8"/>
<rect x="396.0" y="224.79999999999998" width="6" height="5.5" fill="#c8c8c8"/><path d="M396.0 226.7h6M396.0 228.5h6M398.0 224.79999999999998v5.5M400.0 224.79999999999998v5.5" stroke="#888" stroke-width="0.35"/>
<path d="M396.5 231.5l2.4 1.9-2.4 1.9z" fill="#111"/>
<path d="M399.4 237.39999999999998C401.2 232.2,402.4 231.7,403.8 235.2S406.7 238.7,409.5 232.2" fill="none" stroke="#2a3aa8" stroke-width="1.1"/>
<path d="M401.2 239.39999999999998h8" stroke="#bbb" stroke-width="0.6"/>
<rect x="487.1" y="77.5" width="51.299999999999955" height="19.200000000000003" fill="#fff" stroke="#4a4a4a" stroke-width="0.75"/>
<text x="490.70000000000005" y="88.69999999999999" font-size="4.7" fill="#333" stroke="#333" stroke-width="0.08" font-family="Liberation Mono">Tm1</text>
<rect x="503" y="78.7" width="16" height="17.799999999999997" fill="#fff" stroke="#4a4a4a" stroke-width="0.8"/>
<rect x="503.8" y="79.3" width="6" height="5.5" fill="#c8c8c8"/><path d="M503.8 81.2h6M503.8 83.0h6M505.8 79.3v5.5M507.8 79.3v5.5" stroke="#888" stroke-width="0.35"/>
<path d="M504.3 86.0l2.4 1.9-2.4 1.9z" fill="#111"/>
<path d="M507.2 91.9C509 86.7,510.2 86.2,511.6 89.7S514.5 93.2,517.3 86.7" fill="none" stroke="#2a3aa8" stroke-width="1.1"/>
<path d="M509 93.9h8" stroke="#bbb" stroke-width="0.6"/>
<rect x="347.5" y="45.5" width="34.60000000000002" height="28.0" fill="#fcfabd" stroke="#e0dc9a" stroke-width="0.6"/>
<text x="349.7" y="50.0" font-size="4.1" fill="#111" stroke="#111" stroke-width="0.16" font-family="Liberation Sans">V: --</text>
<text x="349.7" y="55.0" font-size="4.1" fill="#111" stroke="#111" stroke-width="0.16" font-family="Liberation Sans">V(p-p): --</text>
<text x="349.7" y="60.0" font-size="4.1" fill="#111" stroke="#111" stroke-width="0.16" font-family="Liberation Sans">V(rms): --</text>
<text x="349.7" y="65.0" font-size="4.1" fill="#111" stroke="#111" stroke-width="0.16" font-family="Liberation Sans">V(dc): --</text>
<text x="349.7" y="70.0" font-size="4.1" fill="#111" stroke="#111" stroke-width="0.16" font-family="Liberation Sans">V(freq): --</text>
<rect x="332.7" y="63.3" width="34.0" height="12.900000000000006" fill="#fcfabd" stroke="#e0dc9a" stroke-width="0.6"/>
<text x="334.9" y="67.8" font-size="4.1" fill="#111" stroke="#111" stroke-width="0.16" font-family="Liberation Sans">P: --</text>
<text x="334.9" y="72.8" font-size="4.1" fill="#111" stroke="#111" stroke-width="0.16" font-family="Liberation Sans">P(avg): --</text>
<circle cx="339.5" cy="79.7" r="4.4" fill="#f4faf4" fill-opacity="0.7" stroke="#62987a" stroke-width="0.8"/>
<text x="339.5" y="81.7" font-size="5.6" text-anchor="middle" fill="#5a7a6a" font-family="Liberation Sans">V</text>
<path d="M337 83.5l-3 3.5" stroke="#9ac8b0" stroke-width="0.6"/>
<rect x="348.2" y="88.6" width="33.900000000000034" height="28.80000000000001" fill="#fcfabd" stroke="#e0dc9a" stroke-width="0.6"/>
<text x="350.4" y="93.1" font-size="4.1" fill="#111" stroke="#111" stroke-width="0.16" font-family="Liberation Sans">V: --</text>
<text x="350.4" y="98.1" font-size="4.1" fill="#111" stroke="#111" stroke-width="0.16" font-family="Liberation Sans">V(p-p): --</text>
<text x="350.4" y="103.1" font-size="4.1" fill="#111" stroke="#111" stroke-width="0.16" font-family="Liberation Sans">V(rms): --</text>
<text x="350.4" y="108.1" font-size="4.1" fill="#111" stroke="#111" stroke-width="0.16" font-family="Liberation Sans">V(dc): --</text>
<text x="350.4" y="113.1" font-size="4.1" fill="#111" stroke="#111" stroke-width="0.16" font-family="Liberation Sans">V(freq): --</text>
<circle cx="353.2" cy="126.1" r="4.4" fill="#f4faf4" fill-opacity="0.7" stroke="#62987a" stroke-width="0.8"/>
<text x="353.2" y="128.1" font-size="5.6" text-anchor="middle" fill="#5a7a6a" font-family="Liberation Sans">V</text>
<path d="M350.5 130l-3 3.5" stroke="#9ac8b0" stroke-width="0.6"/>
<rect x="361.4" y="141.7" width="34.0" height="12.300000000000011" fill="#fcfabd" stroke="#e0dc9a" stroke-width="0.6"/>
<text x="363.59999999999997" y="146.2" font-size="4.1" fill="#111" stroke="#111" stroke-width="0.16" font-family="Liberation Sans">P: --</text>
<text x="363.59999999999997" y="151.2" font-size="4.1" fill="#111" stroke="#111" stroke-width="0.16" font-family="Liberation Sans">P(avg): --</text>
<path d="M398.1 87.3 L398.1 115" fill="none" stroke="#c85a5a" stroke-width="0.7"/>
<circle cx="398.1" cy="106" r="1.05" fill="#b02838"/>
<path d="M383.5 106 L411.9 106" fill="none" stroke="#c85a5a" stroke-width="0.7"/>
<path d="M383.3 106 L383.3 120.3 L391 120.3" fill="none" stroke="#4a4a4a" stroke-width="0.7"/>
<path d="M394.3 123.8l-3.8-0.6 1.8-2.6z" fill="#111"/>
<path d="M398.1 106 L398.1 114" fill="none" stroke="#c85a5a" stroke-width="0.7"/>
<path d="M398.1 114 L395.6 116.5 L400.6 119 L395.6 121.5 L400.6 124 L396.5 126.5 L397.5 128.5" fill="none" stroke="#5a6a5a" stroke-width="0.65"/>
<path d="M403 113 L399 117 L404 119.5 L399 123" fill="none" stroke="#9ac8a8" stroke-width="0.6"/>
<path d="M397.5 128.5 L397.5 172" fill="none" stroke="#d0a8a8" stroke-width="0.7"/>
<text x="401" y="127.8" font-size="4.6" fill="#000" font-weight="bold" stroke="#000" stroke-width="0.12" text-anchor="start" font-family="Liberation Sans">Key=B</text>
<text x="407.5" y="132.3" font-size="4.6" fill="#000" font-weight="bold" stroke="#000" stroke-width="0.12" text-anchor="start" font-family="Liberation Sans">100 %</text>
<circle cx="405.1" cy="117.1" r="4.5" fill="#dcefdc" fill-opacity="0.8" stroke="#6a9a82" stroke-width="0.8"/><text x="405.1" y="119.1" font-size="5.6" text-anchor="middle" fill="#4a6a5a" font-family="Liberation Sans">W</text>
<path d="M411.9 106 L412.78 103.8 L414.54 108.2 L416.31 103.8 L418.07 108.2 L419.83 103.8 L421.59 108.2 L423.36 103.8 L425.12 108.2 L426 106" fill="none" stroke="#4a4a4a" stroke-width="0.65"/>
<path d="M426 106 L439.7 106" fill="none" stroke="#c85a5a" stroke-width="0.7"/>
<circle cx="439.7" cy="106" r="1.05" fill="#b02838"/>
<text x="414.5" y="113" font-size="4.6" fill="#000" font-weight="bold" stroke="#000" stroke-width="0.12" text-anchor="start" font-family="Liberation Sans">50kΩ</text>
<path d="M412.5 83L412.5 91.6L420 87.3z" fill="#1a1ae0"/><path d="M420.2 83v8.6" stroke="#1a1ae0" stroke-width="0.8"/>
<path d="M420 87.3 L440.2 87.3 L440.2 106" fill="none" stroke="#d89090" stroke-width="0.7"/>
<path d="M439.7 106 L439.7 125.5" fill="none" stroke="#4a4a4a" stroke-width="0.7"/>
<text x="407.5" y="97" font-size="4.9" fill="#2a2ad8" font-weight="bold" stroke="#2a2ad8" stroke-width="0.12" text-anchor="start" font-family="Liberation Sans">1N3064</text>
<rect x="405.5" y="51.6" width="32.80000000000001" height="14.399999999999999" fill="#fcfabd" stroke="#e0dc9a" stroke-width="0.6"/>
<text x="407.7" y="56.1" font-size="4.1" fill="#111" stroke="#111" stroke-width="0.16" font-family="Liberation Sans">P: --</text>
<text x="407.7" y="61.1" font-size="4.1" fill="#111" stroke="#111" stroke-width="0.16" font-family="Liberation Sans">P(avg): --</text>
<path d="M406 66 L406 87" fill="none" stroke="#c8c8c8" stroke-width="0.5"/>
<path d="M435.2 126h9.0M435.2 129.6h9.0" stroke="#111" stroke-width="1"/>
<path d="M439.7 129.6 L439.7 134" fill="none" stroke="#4a4a4a" stroke-width="0.7"/>
<text x="446.5" y="129.5" font-size="4.6" fill="#000" font-weight="bold" stroke="#000" stroke-width="0.12" text-anchor="start" font-family="Liberation Sans">100uF</text>
<circle cx="447.2" cy="103" r="4.4" fill="#f4faf4" fill-opacity="0.7" stroke="#62987a" stroke-width="0.8"/>
<text x="447.2" y="105" font-size="5.6" text-anchor="middle" fill="#5a7a6a" font-family="Liberation Sans">V</text>
<path d="M444.5 107l-3 3" stroke="#9ac8b0" stroke-width="0.6"/>
<path d="M449.2 87.3 L449.2 133.8" fill="none" stroke="#a04040" stroke-width="0.7"/>
<path d="M449.2 87.3 L487.1 87.3" fill="none" stroke="#6a4a4a" stroke-width="0.7"/>
<rect x="450" y="57.8" width="34" height="27.299999999999997" fill="#fcfabd" stroke="#e0dc9a" stroke-width="0.6"/>
<text x="452.2" y="62.3" font-size="4.1" fill="#111" stroke="#111" stroke-width="0.16" font-family="Liberation Sans">V: --</text>
<text x="452.2" y="67.3" font-size="4.1" fill="#111" stroke="#111" stroke-width="0.16" font-family="Liberation Sans">V(p-p): --</text>
<text x="452.2" y="72.3" font-size="4.1" fill="#111" stroke="#111" stroke-width="0.16" font-family="Liberation Sans">V(rms): --</text>
<text x="452.2" y="77.3" font-size="4.1" fill="#111" stroke="#111" stroke-width="0.16" font-family="Liberation Sans">V(dc): --</text>
<text x="452.2" y="82.3" font-size="4.1" fill="#111" stroke="#111" stroke-width="0.16" font-family="Liberation Sans">V(freq): --</text>
<rect x="425.5" y="133.8" width="35.10000000000002" height="27.299999999999983" fill="#fcfabd" stroke="#e0dc9a" stroke-width="0.6"/>
<text x="427.7" y="138.3" font-size="4.1" fill="#111" stroke="#111" stroke-width="0.16" font-family="Liberation Sans">V: --</text>
<text x="427.7" y="143.3" font-size="4.1" fill="#111" stroke="#111" stroke-width="0.16" font-family="Liberation Sans">V(p-p): --</text>
<text x="427.7" y="148.3" font-size="4.1" fill="#111" stroke="#111" stroke-width="0.16" font-family="Liberation Sans">V(rms): --</text>
<text x="427.7" y="153.3" font-size="4.1" fill="#111" stroke="#111" stroke-width="0.16" font-family="Liberation Sans">V(dc): --</text>
<text x="427.7" y="158.3" font-size="4.1" fill="#111" stroke="#111" stroke-width="0.16" font-family="Liberation Sans">V(freq): --</text>
<circle cx="404.8" cy="144.8" r="4.4" fill="#f4faf4" fill-opacity="0.7" stroke="#62987a" stroke-width="0.8"/>
<text x="404.8" y="146.8" font-size="5.6" text-anchor="middle" fill="#5a7a6a" font-family="Liberation Sans">V</text>
<path d="M409 145l16 5" stroke="#b0c4c4" stroke-width="0.5"/><path d="M401.5 148l-3 3" stroke="#9ac8b0" stroke-width="0.6"/>
<circle cx="408.3" cy="163.5" r="4.4" fill="#f4faf4" fill-opacity="0.7" stroke="#62987a" stroke-width="0.8"/>
<text x="408.3" y="165.5" font-size="5.6" text-anchor="middle" fill="#5a7a6a" font-family="Liberation Sans">W</text>
<path d="M411 166.5l8 9" stroke="#b0c4c4" stroke-width="0.5"/><path d="M405 167l-4 4" stroke="#9ac8b0" stroke-width="0.6"/>
<path d="M398.1 172 L398.1 171.5" fill="none" stroke="#4a4a4a" stroke-width="0.7"/>
<path d="M393 171.5h10M395.5 174.5h5M393 177.5h10M395.5 180.5h5" stroke="#222" stroke-width="0.8"/>
<path d="M398.1 180.5 L398.1 199.5" fill="none" stroke="#4a4a4a" stroke-width="0.7"/>
<path d="M394.1 200.7h8M395.5 202.1h5.2M396.90000000000003 203.5h2.4" stroke="#3a3a3a" stroke-width="0.75"/>
<text x="404" y="179" font-size="4.7" fill="#000" font-weight="bold" stroke="#000" stroke-width="0.12" text-anchor="start" font-family="Liberation Sans">14V</text>
<circle cx="398.1" cy="190.5" r="1.05" fill="#b02838"/>
<path d="M398.1 190.5 L407.5 190.5 L407.5 200 L558 200 L558 190" fill="none" stroke="#c85a5a" stroke-width="0.7"/>
<rect x="419.4" y="174.7" width="34.30000000000001" height="13.5" fill="#fcfabd" stroke="#e0dc9a" stroke-width="0.6"/>
<text x="421.59999999999997" y="179.2" font-size="4.1" fill="#111" stroke="#111" stroke-width="0.16" font-family="Liberation Sans">P: --</text>
<text x="421.59999999999997" y="184.2" font-size="4.1" fill="#111" stroke="#111" stroke-width="0.16" font-family="Liberation Sans">P(avg): --</text>
<path d="M548 190 L548 209.2" fill="none" stroke="#e6c9a0" stroke-width="0.7"/>
<rect x="543.3" y="148.1" width="98.6" height="42" fill="#c9e3c9" stroke="#5a6a5a" stroke-width="0.8"/>
<rect x="547" y="151.7" width="69.2" height="25.7" fill="#c0c0c0" stroke="#a8c8a8" stroke-width="0.6"/>
<polyline points="548.0,162.75 548.7,161.03 549.4,159.39 550.1,157.86 550.8,156.49 551.5,155.31 552.2,154.35 552.9,153.64 553.6,153.18 554.3,153.00 555.0,153.10 555.7,153.48 556.4,154.12 557.1,155.01 557.8,156.13 558.5,157.45 559.2,158.94 559.9,160.55 560.6,162.25 561.3,164.00 562.0,165.75 562.7,167.45 563.4,169.06 564.1,170.55 564.8,171.87 565.5,172.99 566.2,173.88 566.9,174.52 567.6,174.90 568.3,175.00 569.0,174.82 569.7,174.36 570.4,173.65 571.1,172.69 571.8,171.51 572.5,170.14 573.2,168.61 573.9,166.97 574.6,165.25 575.3,163.50 576.0,161.76 576.7,160.08 577.4,158.50 578.1,157.06 578.8,155.79 579.5,154.73 580.2,153.91 580.9,153.34 581.6,153.05 582.3,153.03 583.0,153.28 583.7,153.81 584.4,154.60 585.1,155.63 585.8,156.87 586.5,158.28 587.2,159.85 587.9,161.52 588.6,163.25 589.3,165.00 590.0,166.73 590.7,168.38 591.4,169.93 592.1,171.32 592.8,172.53 593.5,173.53 594.2,174.28 594.9,174.77 595.6,174.99 596.3,174.93 597.0,174.59 597.7,173.99 598.4,173.13 599.1,172.04 599.8,170.75 600.5,169.28 601.2,167.68 601.9,165.99 602.6,164.25 603.3,162.50 604.0,160.79 604.7,159.16 605.4,157.66 606.1,156.31 606.8,155.16 607.5,154.23 608.2,153.55 608.9,153.14 609.6,153.00 610.3,153.14 611.0,153.55 611.7,154.23 612.4,155.16 613.1,156.31 613.8,157.66 614.5,159.16" fill="none" stroke="#333" stroke-width="0.6"/>
<text x="548" y="173.5" font-size="3.8" fill="#333" stroke="#333" stroke-width="0.1" text-anchor="start" font-family="Liberation Sans">Agilent</text>
<rect x="620.5" y="152.0" width="6" height="2.8" fill="#8a9a8a" stroke="#4a5a4a" stroke-width="0.4"/><rect x="627.5" y="152.0" width="6" height="2.8" fill="#8a9a8a" stroke="#4a5a4a" stroke-width="0.4"/>
<rect x="620.5" y="157.6" width="6" height="2.8" fill="#8a9a8a" stroke="#4a5a4a" stroke-width="0.4"/><rect x="627.5" y="157.6" width="6" height="2.8" fill="#8a9a8a" stroke="#4a5a4a" stroke-width="0.4"/>
<rect x="620.5" y="163.2" width="6" height="2.8" fill="#8a9a8a" stroke="#4a5a4a" stroke-width="0.4"/><rect x="627.5" y="163.2" width="6" height="2.8" fill="#8a9a8a" stroke="#4a5a4a" stroke-width="0.4"/>
<rect x="620.5" y="168.8" width="6" height="2.8" fill="#8a9a8a" stroke="#4a5a4a" stroke-width="0.4"/><rect x="627.5" y="168.8" width="6" height="2.8" fill="#8a9a8a" stroke="#4a5a4a" stroke-width="0.4"/>
<rect x="620.5" y="174.4" width="6" height="2.8" fill="#8a9a8a" stroke="#4a5a4a" stroke-width="0.4"/><rect x="627.5" y="174.4" width="6" height="2.8" fill="#8a9a8a" stroke="#4a5a4a" stroke-width="0.4"/>
<circle cx="638.5" cy="158" r="1.5" fill="#8a9a8a" stroke="#333" stroke-width="0.5"/><path d="M640 158h7" stroke="#333" stroke-width="0.5"/>
<circle cx="638.5" cy="167" r="1.5" fill="#8a9a8a" stroke="#333" stroke-width="0.5"/><path d="M640 167h7" stroke="#333" stroke-width="0.5"/>
<circle cx="638.5" cy="176" r="1.5" fill="#8a9a8a" stroke="#333" stroke-width="0.5"/><path d="M640 176h7" stroke="#333" stroke-width="0.5"/>
<circle cx="548" cy="186" r="1.5" fill="#8a9a8a" stroke="#333" stroke-width="0.5"/>
<circle cx="558" cy="186" r="1.5" fill="#8a9a8a" stroke="#333" stroke-width="0.5"/>
<rect x="564.8" y="184.8" width="2.4" height="2.4" fill="#8a9a8a" stroke="#333" stroke-width="0.4"/><path d="M566.0 187.2v8.8" stroke="#555" stroke-width="0.45"/>
<rect x="569.52" y="184.8" width="2.4" height="2.4" fill="#8a9a8a" stroke="#333" stroke-width="0.4"/><path d="M570.72 187.2v8.8" stroke="#555" stroke-width="0.45"/>
<rect x="574.24" y="184.8" width="2.4" height="2.4" fill="#8a9a8a" stroke="#333" stroke-width="0.4"/><path d="M575.44 187.2v8.8" stroke="#555" stroke-width="0.45"/>
<rect x="578.9599999999999" y="184.8" width="2.4" height="2.4" fill="#8a9a8a" stroke="#333" stroke-width="0.4"/><path d="M580.16 187.2v8.8" stroke="#555" stroke-width="0.45"/>
<rect x="583.68" y="184.8" width="2.4" height="2.4" fill="#8a9a8a" stroke="#333" stroke-width="0.4"/><path d="M584.88 187.2v8.8" stroke="#555" stroke-width="0.45"/>
<rect x="588.4" y="184.8" width="2.4" height="2.4" fill="#8a9a8a" stroke="#333" stroke-width="0.4"/><path d="M589.6 187.2v8.8" stroke="#555" stroke-width="0.45"/>
<rect x="593.12" y="184.8" width="2.4" height="2.4" fill="#8a9a8a" stroke="#333" stroke-width="0.4"/><path d="M594.32 187.2v8.8" stroke="#555" stroke-width="0.45"/>
<rect x="597.8399999999999" y="184.8" width="2.4" height="2.4" fill="#8a9a8a" stroke="#333" stroke-width="0.4"/><path d="M599.04 187.2v8.8" stroke="#555" stroke-width="0.45"/>
<rect x="602.56" y="184.8" width="2.4" height="2.4" fill="#8a9a8a" stroke="#333" stroke-width="0.4"/><path d="M603.76 187.2v8.8" stroke="#555" stroke-width="0.45"/>
<rect x="607.28" y="184.8" width="2.4" height="2.4" fill="#8a9a8a" stroke="#333" stroke-width="0.4"/><path d="M608.48 187.2v8.8" stroke="#555" stroke-width="0.45"/>
<rect x="612.0" y="184.8" width="2.4" height="2.4" fill="#8a9a8a" stroke="#333" stroke-width="0.4"/><path d="M613.2 187.2v8.8" stroke="#555" stroke-width="0.45"/>
<rect x="616.7199999999999" y="184.8" width="2.4" height="2.4" fill="#8a9a8a" stroke="#333" stroke-width="0.4"/><path d="M617.92 187.2v8.8" stroke="#555" stroke-width="0.45"/>
<rect x="621.4399999999999" y="184.8" width="2.4" height="2.4" fill="#8a9a8a" stroke="#333" stroke-width="0.4"/><path d="M622.64 187.2v8.8" stroke="#555" stroke-width="0.45"/>
<rect x="626.16" y="184.8" width="2.4" height="2.4" fill="#8a9a8a" stroke="#333" stroke-width="0.4"/><path d="M627.36 187.2v8.8" stroke="#555" stroke-width="0.45"/>
<rect x="630.88" y="184.8" width="2.4" height="2.4" fill="#8a9a8a" stroke="#333" stroke-width="0.4"/><path d="M632.08 187.2v8.8" stroke="#555" stroke-width="0.45"/>
<rect x="635.5999999999999" y="184.8" width="2.4" height="2.4" fill="#8a9a8a" stroke="#333" stroke-width="0.4"/><path d="M636.8 187.2v8.8" stroke="#555" stroke-width="0.45"/>
<path d="M548 186 L548 190" fill="none" stroke="#333" stroke-width="0.5"/>
<path d="M558 186 L558 190" fill="none" stroke="#333" stroke-width="0.5"/>
</g></svg>

</div></body></html>
